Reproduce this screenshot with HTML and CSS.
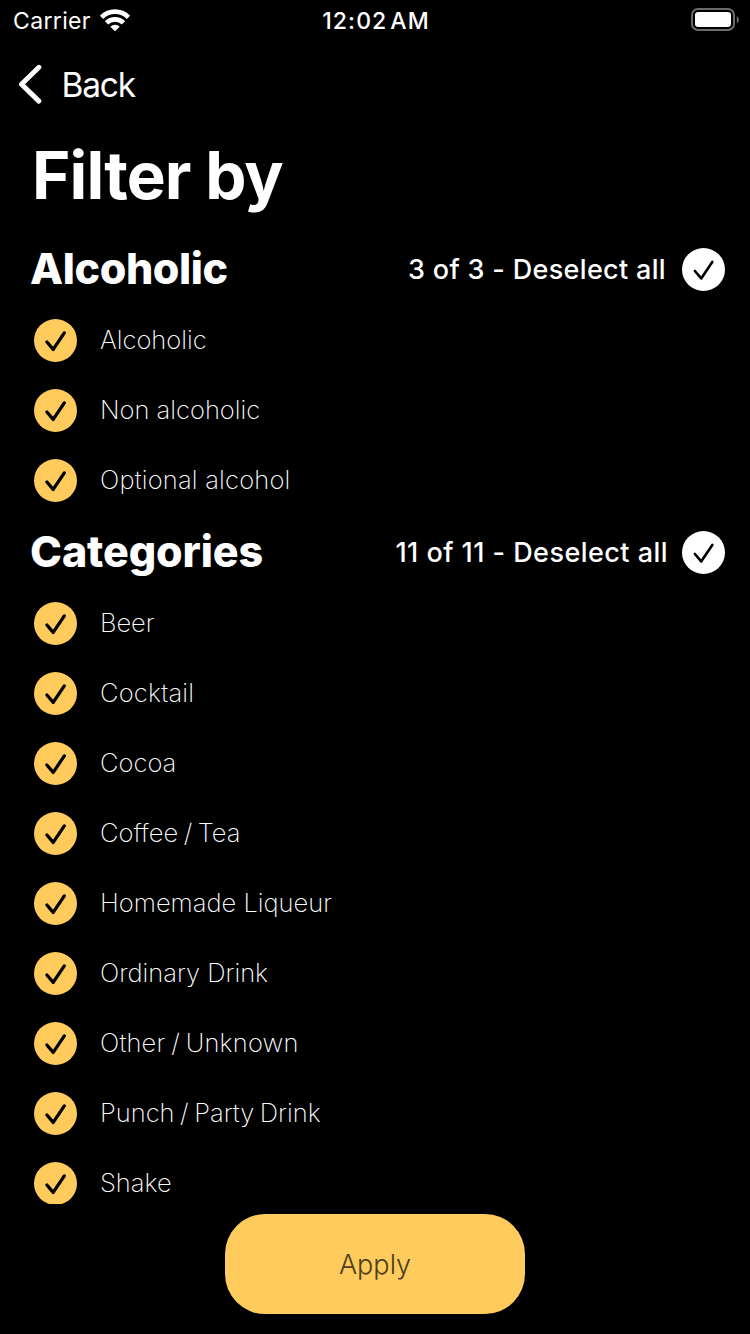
FILE: index.html
```html
<!DOCTYPE html>
<html lang="en">
<head>
<meta charset="utf-8">
<title>Filter by</title>
<link rel="stylesheet" href="styles.css">
</head>
<body>
<svg class="defs" width="0" height="0" aria-hidden="true">
  <symbol id="check" viewBox="0 0 43 43"><path d="M12.900 23 19.200 30.400 30.300 13.900" fill="none" stroke="#000" stroke-linecap="round" stroke-linejoin="round"/></symbol>
</svg>
<div class="screen">
  <div class="status">
    <div class="status-left">
      <span class="carrier">Carrier</span>
      <svg class="wifi" width="30" height="23" viewBox="0 0 30 23">
        <g fill="none" stroke="#fff" stroke-width="4.600">
          <path d="M1.500 8.300a19 19 0 0 1 27 0"/>
          <path d="M6.500 13.900a12 12 0 0 1 17 0"/>
        </g>
        <path d="M10.300 17.700a6.500 6.500 0 0 1 9.400 0L15 22.300z" fill="#fff"/>
      </svg>
    </div>
    <span class="time">12:02<span class="meridiem">AM</span></span>
    <svg class="battery" width="48" height="23" viewBox="0 0 48 23">
      <rect x="1" y="1" width="42" height="21" rx="6" fill="none" stroke="#6b6b6b" stroke-width="2"/>
      <rect x="4" y="4" width="36" height="15" rx="3.200" fill="#fff"/>
      <path d="M45.800 8v7.400q2-1 2-3.700t-2-3.700z" fill="#6b6b6b"/>
    </svg>
  </div>
  <nav class="nav">
    <svg width="24" height="40" viewBox="0 0 24 40"><path d="M20.900 3.300 3.500 20.200 20.900 37.100" fill="none" stroke="#fff" stroke-width="5" stroke-linecap="round" stroke-linejoin="round"/></svg>
    <span class="back">Back</span>
  </nav>
  <h1 class="title"><span>Filter by</span></h1>
  <main class="list">
    <div class="section"><h2 class="alc">Alcoholic</h2><span class="toggle">3 of 3 - Deselect all</span><svg class="dot white"><use href="#check"/></svg></div>
    <div class="row"><svg class="dot"><use href="#check"/></svg><span>Alcoholic</span></div>
    <div class="row"><svg class="dot"><use href="#check"/></svg><span>Non alcoholic</span></div>
    <div class="row"><svg class="dot"><use href="#check"/></svg><span class="wide">Optional alcohol</span></div>
    <div class="section"><h2>Categories</h2><span class="toggle second">11 of 11 - Deselect all</span><svg class="dot white"><use href="#check"/></svg></div>
    <div class="row"><svg class="dot"><use href="#check"/></svg><span>Beer</span></div>
    <div class="row"><svg class="dot"><use href="#check"/></svg><span class="wide">Cocktail</span></div>
    <div class="row"><svg class="dot"><use href="#check"/></svg><span>Cocoa</span></div>
    <div class="row"><svg class="dot"><use href="#check"/></svg><span class="slashed">Coffee / Tea</span></div>
    <div class="row"><svg class="dot"><use href="#check"/></svg><span>Homemade Liqueur</span></div>
    <div class="row"><svg class="dot"><use href="#check"/></svg><span>Ordinary Drink</span></div>
    <div class="row"><svg class="dot"><use href="#check"/></svg><span class="slashed wide">Other / Unknown</span></div>
    <div class="row"><svg class="dot"><use href="#check"/></svg><span class="slashed">Punch / Party Drink</span></div>
    <div class="row"><svg class="dot"><use href="#check"/></svg><span>Shake</span></div>
  </main>
  <footer class="footer"><button class="apply">Apply</button></footer>
</div>
</body>
</html>
```
FILE: styles.css
```css
* { box-sizing: border-box; }
body { margin: 0; background: #000; color: #fff; font-family: Inter, "Liberation Sans", sans-serif; }
h1, h2 { margin: 0; }
svg { display: block; flex: none; }
.defs { display: none; }
.screen { width: 750px; height: 1334px; display: flex; flex-direction: column; overflow: hidden; background: #000; white-space: nowrap; }

.status { flex: none; height: 40px; display: grid; grid-template-columns: 1fr auto 1fr; padding: 8px 11px 0 13px; line-height: 26px; font-size: 23px; }
.status-left { display: flex; gap: 9px; }
.carrier { letter-spacing: 0.35px; }
.wifi { margin-top: 1px; }
.time { font-weight: 500; letter-spacing: 1.1px; }
.meridiem { margin-left: 3px; }
.battery { justify-self: end; }

.nav { flex: none; height: 88px; display: flex; gap: 19.5px; padding: 24px 0 0 18px; }
.back { font-size: 33.5px; line-height: 42px; letter-spacing: -1.2px; }

.title { flex: none; height: 105px; padding: 8px 0 0 32px; font-size: 65.5px; line-height: 80px; font-weight: 700; letter-spacing: -0.9px; }

.list { flex: none; height: 971px; overflow: hidden; }
.section { height: 73px; display: flex; padding: 15px 25px 0 30px; line-height: 43px; }
.section h2 { flex: 1; font-size: 43px; line-height: 41px; font-weight: 800; letter-spacing: -0.1px; }
.section .alc { letter-spacing: -0.4px; }
.toggle { margin-right: 16px; font-size: 27px; font-weight: 500; letter-spacing: 0.33px; }
.toggle.second { margin-right: 14px; letter-spacing: 0.46px; }
.row { height: 70px; display: flex; gap: 23px; padding: 13px 0 0 34px; font-size: 25.5px; line-height: 41px; font-weight: 200; }
.row .wide { letter-spacing: 0.2px; }
.row .slashed { word-spacing: -1.6px; }
.dot { width: 43px; height: 43px; border-radius: 50%; background: #ffcb5c; stroke-width: 3.3; }
.white { background: #fff; stroke-width: 2.6; }

.footer { flex: 1; display: flex; justify-content: center; padding-top: 10px; }
.apply { width: 300px; height: 100px; padding: 2px 0 0; border: 0; border-radius: 40px; background: #ffcb5c; color: #4c3d1c; font: 300 27px/98px Inter, sans-serif; }
```
